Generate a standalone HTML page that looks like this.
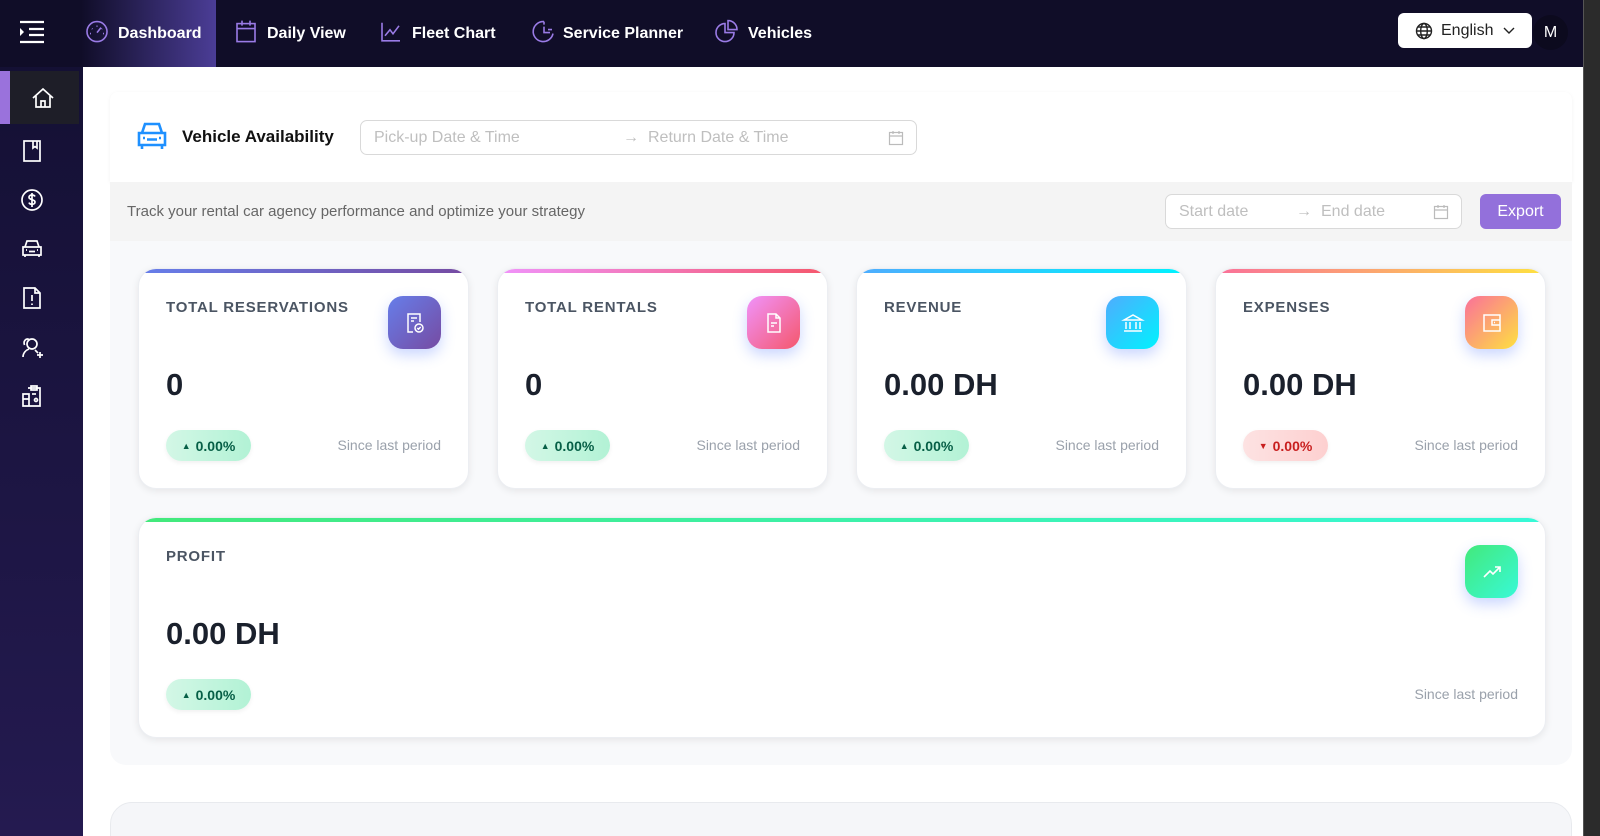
<!DOCTYPE html>
<html><head><meta charset="utf-8"><style>
*{box-sizing:border-box;margin:0;padding:0}
html{overflow:hidden;height:836px}
body{width:1600px;height:836px;overflow:hidden;font-family:"Liberation Sans",sans-serif;background:#fff;position:relative}
.top{position:absolute;left:0;top:0;width:1583px;height:67px;background:#100d28}
.nav{position:absolute;top:0;height:67px;display:flex;align-items:center;color:#fff;font-size:16px;font-weight:bold}
.nav svg{position:absolute;left:0;top:50%;transform:translateY(-60%)}
.side{position:absolute;left:0;top:67px;width:83px;height:769px;background:linear-gradient(#141034,#241a50)}
.si{position:absolute;left:20px;width:24px;height:24px}
.main{position:absolute;left:83px;top:67px;width:1500px;height:769px;background:#fff;overflow:hidden}
.sb{position:absolute;left:1583px;top:0;width:17px;height:836px;background:#2b2b2b;border-left:1px solid #555}
.card{position:absolute;background:#fff;border-radius:18px;box-shadow:0 2px 8px rgba(0,0,0,.08);border:1px solid #eceef2;overflow:hidden}
.card .bar{position:absolute;left:0;top:0;right:0;height:4px}
.card .t{position:absolute;left:27px;top:30px;font-size:15px;font-weight:bold;color:#4b5563;letter-spacing:.8px}
.card .ic{position:absolute;right:27px;top:27px;width:53px;height:53px;border-radius:15px;box-shadow:0 6px 14px rgba(80,120,255,.3);display:flex;align-items:center;justify-content:center}
.card .v{position:absolute;left:27px;top:98px;font-size:31px;font-weight:bold;color:#1a202c}
.card .p{position:absolute;left:27px;bottom:27px;width:85px;height:31px;border-radius:16px;background:linear-gradient(90deg,#d3f7e6,#b2f2d5);color:#065f46;font-size:14px;font-weight:bold;display:flex;align-items:center;justify-content:center;gap:5px;box-shadow:0 2px 5px rgba(0,0,0,.06)}
.card .p.r{background:linear-gradient(90deg,#fde2e2,#fdd0d0);color:#c81e1e}
.card .s{position:absolute;right:27px;bottom:35px;font-size:14px;color:#9aa1ab}
.inp{position:absolute;border:1px solid #d9d9d9;border-radius:7px;background:#fff;color:#bfbfbf;font-size:16px}
.inp span{position:absolute;top:50%;transform:translateY(-50%)}
</style></head><body>
<div class="top">
 <svg style="position:absolute;left:19px;top:20px" width="26" height="24" viewBox="0 0 26 24" fill="none" stroke="#fff" stroke-width="2.2"><path d="M1 2h24M10 9h15M10 15h15M1 22h24"/><path d="M1 8l4 4-4 4z" fill="#fff" stroke="none"/></svg>
 <div style="position:absolute;left:81px;top:0;width:135px;height:67px;background:linear-gradient(90deg,#100d28,#4b3d96)"></div>
 <div class="nav" style="left:85px;padding-left:33px">
  <svg width="24" height="24" viewBox="0 0 24 24" fill="none" stroke="#9a7be6" stroke-width="1.6"><circle cx="12" cy="12" r="10"/><path d="M12 13l4-5M7 9l.5.5M12 6v1M17 9l-.5.5M5 14h1M18 14h1"/></svg>Dashboard</div>
 <div class="nav" style="left:235px;padding-left:32px">
  <svg width="22" height="24" viewBox="0 0 22 24" fill="none" stroke="#9a7be6" stroke-width="1.6"><rect x="2" y="4" width="18" height="18"/><path d="M2 9h18M7 1v5M15 1v5"/></svg>Daily View</div>
 <div class="nav" style="left:380px;padding-left:32px">
  <svg width="22" height="22" viewBox="0 0 22 22" fill="none" stroke="#9a7be6" stroke-width="1.6"><path d="M2 2v18h18M5 15l5-6 3 4 6-8"/></svg>Fleet Chart</div>
 <div class="nav" style="left:531px;padding-left:32px">
  <svg width="24" height="24" viewBox="0 0 24 24" fill="none" stroke="#9a7be6" stroke-width="1.6"><path d="M13 2a10 10 0 1 0 9 12"/><path d="M13 7v6h6M13 2v3M17 10h4"/></svg>Service Planner</div>
 <div class="nav" style="left:714px;padding-left:34px">
  <svg width="24" height="24" viewBox="0 0 24 24" fill="none" stroke="#9a7be6" stroke-width="1.6"><path d="M11 4a9 9 0 1 0 9 9h-9z"/><path d="M14 1a9 9 0 0 1 9 9h-9z"/></svg>Vehicles</div>
 <div style="position:absolute;left:1398px;top:13px;width:134px;height:35px;background:#fff;border-radius:6px;font-size:16px;color:#222;display:flex;align-items:center;padding-left:17px">
  <svg width="18" height="18" viewBox="0 0 18 18" fill="none" stroke="#222" stroke-width="1.4"><circle cx="9" cy="9" r="7.5"/><ellipse cx="9" cy="9" rx="3.3" ry="7.5"/><path d="M1.5 9h15M3 5h12M3 13h12"/></svg>
  <span style="margin-left:8px">English</span>
  <svg style="margin-left:10px" width="12" height="8" viewBox="0 0 12 8" fill="none" stroke="#222" stroke-width="1.4"><path d="M1 1l5 5 5-5"/></svg></div>
 <div style="position:absolute;left:1533px;top:15px;width:35px;height:35px;border-radius:50%;background:#0c0a1e;color:#fff;font-size:16px;display:flex;align-items:center;justify-content:center">M</div>
</div>
<div class="side">
 <div style="position:absolute;left:0;top:4px;width:10px;height:53px;background:#9a72dc"></div>
 <div style="position:absolute;left:10px;top:4px;width:69px;height:53px;background:#1e1e28"></div>
 <svg class="si" style="top:19px;left:31px" width="24" height="24" viewBox="0 0 24 24" fill="none" stroke="#fff" stroke-width="1.7"><path d="M2 12L12 3l10 9M5 10v11h14V10M10 21v-6h4v6"/></svg>
 <svg class="si" style="top:72px" viewBox="0 0 24 24" fill="none" stroke="#fff" stroke-width="1.7"><rect x="4" y="2" width="16" height="20"/><path d="M13 2v7l2-1.5 2 1.5V2"/></svg>
 <svg class="si" style="top:121px" viewBox="0 0 24 24" fill="none" stroke="#fff" stroke-width="1.7"><circle cx="12" cy="12" r="10"/><path d="M15 8.5c-.5-1-1.6-1.5-3-1.5-1.7 0-3 .8-3 2.3 0 3 6 1.7 6 4.7 0 1.5-1.3 2.3-3 2.3-1.4 0-2.6-.6-3-1.7M12 5v14"/></svg>
 <svg class="si" style="top:170px" viewBox="0 0 24 24" fill="none" stroke="#fff" stroke-width="1.7"><path d="M5 10l2-6h10l2 6M3 10h18v8H3zM5 18v2M19 18v2M9 14.5h6M6 13h1M17 13h1"/></svg>
 <svg class="si" style="top:219px" viewBox="0 0 24 24" fill="none" stroke="#fff" stroke-width="1.7"><path d="M4 2h11l5 5v15H4z M15 2v5h5"/><path d="M12 9v6M12 17.5v1.5"/></svg>
 <svg class="si" style="top:268px" viewBox="0 0 24 24" fill="none" stroke="#fff" stroke-width="1.7"><circle cx="12" cy="9" r="5"/><path d="M3 22c0-4 3-7 6-8M9 4.5C6 3 3 6 4.5 10M15 15l3 3M17 20h6M20 17v6"/></svg>
 <svg class="si" style="top:317px" viewBox="0 0 24 24" fill="none" stroke="#fff" stroke-width="1.7"><path d="M8 4h12v18H8M11 2h6v4h-6zM3 10h6v12H3zM3 15h6"/><circle cx="16" cy="16" r="1.5"/><path d="M12 10h4"/></svg>
</div>
<div class="main">
 <div style="position:absolute;left:27px;top:25px;width:1462px;height:90px;background:#fff;box-shadow:0 1px 4px rgba(0,0,0,.05);border-radius:8px 8px 0 0"></div>
 <svg style="position:absolute;left:53px;top:54px" width="32" height="30" viewBox="0 0 32 30" fill="none" stroke="#1e90ff" stroke-width="2.6"><path d="M6 12L9 3h14l3 9M3 12h26v12H3zM6 24v4M26 24v4M11 18.5h10M7 17h2M23 17h2"/></svg>
 <div style="position:absolute;left:99px;top:60px;font-size:17px;font-weight:bold;color:#111">Vehicle Availability</div>
 <div class="inp" style="left:277px;top:53px;width:557px;height:35px"><span style="left:13px">Pick-up Date &amp; Time</span><span style="left:262px">→</span><span style="left:287px">Return Date &amp; Time</span>
  <svg style="position:absolute;right:12px;top:9px" width="16" height="16" viewBox="0 0 16 16" fill="none" stroke="#bbb" stroke-width="1.2"><rect x="1.5" y="2.5" width="13" height="12"/><path d="M1.5 6h13M5 1v3M11 1v3"/></svg></div>
 <div style="position:absolute;left:27px;top:115px;width:1462px;height:59px;background:#f4f4f4"></div>
 <div style="position:absolute;left:44px;top:136px;font-size:15px;color:#666">Track your rental car agency performance and optimize your strategy</div>
 <div class="inp" style="left:1082px;top:127px;width:297px;height:35px"><span style="left:13px">Start date</span><span style="left:130px">→</span><span style="left:155px">End date</span>
  <svg style="position:absolute;right:12px;top:9px" width="16" height="16" viewBox="0 0 16 16" fill="none" stroke="#bbb" stroke-width="1.2"><rect x="1.5" y="2.5" width="13" height="12"/><path d="M1.5 6h13M5 1v3M11 1v3"/></svg></div>
 <div style="position:absolute;left:1397px;top:127px;width:81px;height:35px;background:#9370db;border-radius:6px;color:#fff;font-size:16px;display:flex;align-items:center;justify-content:center">Export</div>
 <div style="position:absolute;left:27px;top:174px;width:1462px;height:524px;background:#f8f9fb;border-radius:0 0 16px 16px"></div>
 <div style="position:absolute;left:27px;top:735px;width:1462px;height:60px;background:#f5f6f9;border:1px solid #e8eaee;border-radius:22px"></div>
</div>
<div class="card" style="left:138px;top:268px;width:331px;height:221px"><div class="bar" style="background:linear-gradient(90deg,#667eea,#764ba2)"></div>
 <div class="t">TOTAL RESERVATIONS</div><div class="ic" style="background:linear-gradient(135deg,#667eea,#764ba2)"><svg width="24" height="24" viewBox="0 0 24 24" fill="none" stroke="#fff" stroke-width="1.5"><path d="M10 21H5V3h12v8"/><path d="M8 7h6M8 10h3"/><circle cx="16" cy="17" r="4"/><path d="M14.3 17l1.2 1.2 2.2-2.2"/></svg></div>
 <div class="v">0</div><div class="p"><span style="font-size:9px">▲</span>0.00%</div><div class="s">Since last period</div></div>
<div class="card" style="left:497px;top:268px;width:331px;height:221px"><div class="bar" style="background:linear-gradient(90deg,#f093fb,#f5576c)"></div>
 <div class="t">TOTAL RENTALS</div><div class="ic" style="background:linear-gradient(135deg,#f093fb,#f5576c)"><svg width="24" height="24" viewBox="0 0 24 24" fill="none" stroke="#fff" stroke-width="1.5"><path d="M6 3h8l4 4v14H6z M14 3v4h4M9 12h6M9 15h3"/></svg></div>
 <div class="v">0</div><div class="p"><span style="font-size:9px">▲</span>0.00%</div><div class="s">Since last period</div></div>
<div class="card" style="left:856px;top:268px;width:331px;height:221px"><div class="bar" style="background:linear-gradient(90deg,#4facfe,#00f2fe)"></div>
 <div class="t">REVENUE</div><div class="ic" style="background:linear-gradient(135deg,#4facfe,#00f2fe)"><svg width="24" height="24" viewBox="0 0 24 24" fill="none" stroke="#fff" stroke-width="1.5"><path d="M3 9l9-5 9 5zM5 11v7M9 11v7M15 11v7M19 11v7M3 20h18"/></svg></div>
 <div class="v">0.00 DH</div><div class="p"><span style="font-size:9px">▲</span>0.00%</div><div class="s">Since last period</div></div>
<div class="card" style="left:1215px;top:268px;width:331px;height:221px"><div class="bar" style="background:linear-gradient(90deg,#fa709a,#fee140)"></div>
 <div class="t">EXPENSES</div><div class="ic" style="background:linear-gradient(135deg,#fa709a,#fee140)"><svg width="24" height="24" viewBox="0 0 24 24" fill="none" stroke="#fff" stroke-width="1.5"><rect x="4" y="4" width="16" height="16"/><path d="M20 9h-8v5h8M14 11.5h1"/></svg></div>
 <div class="v">0.00 DH</div><div class="p r"><span style="font-size:9px">▼</span>0.00%</div><div class="s">Since last period</div></div>
<div class="card" style="left:138px;top:517px;width:1408px;height:221px"><div class="bar" style="background:linear-gradient(90deg,#43e97b,#38f9d7)"></div>
 <div class="t">PROFIT</div><div class="ic" style="background:linear-gradient(135deg,#43e97b,#38f9d7)"><svg width="24" height="24" viewBox="0 0 24 24" fill="none" stroke="#fff" stroke-width="1.6"><path d="M4 17l6-6 3 3 7-7M15 7h5v5"/></svg></div>
 <div class="v">0.00 DH</div><div class="p"><span style="font-size:9px">▲</span>0.00%</div><div class="s">Since last period</div></div>
<div class="sb"></div>
</body></html>
